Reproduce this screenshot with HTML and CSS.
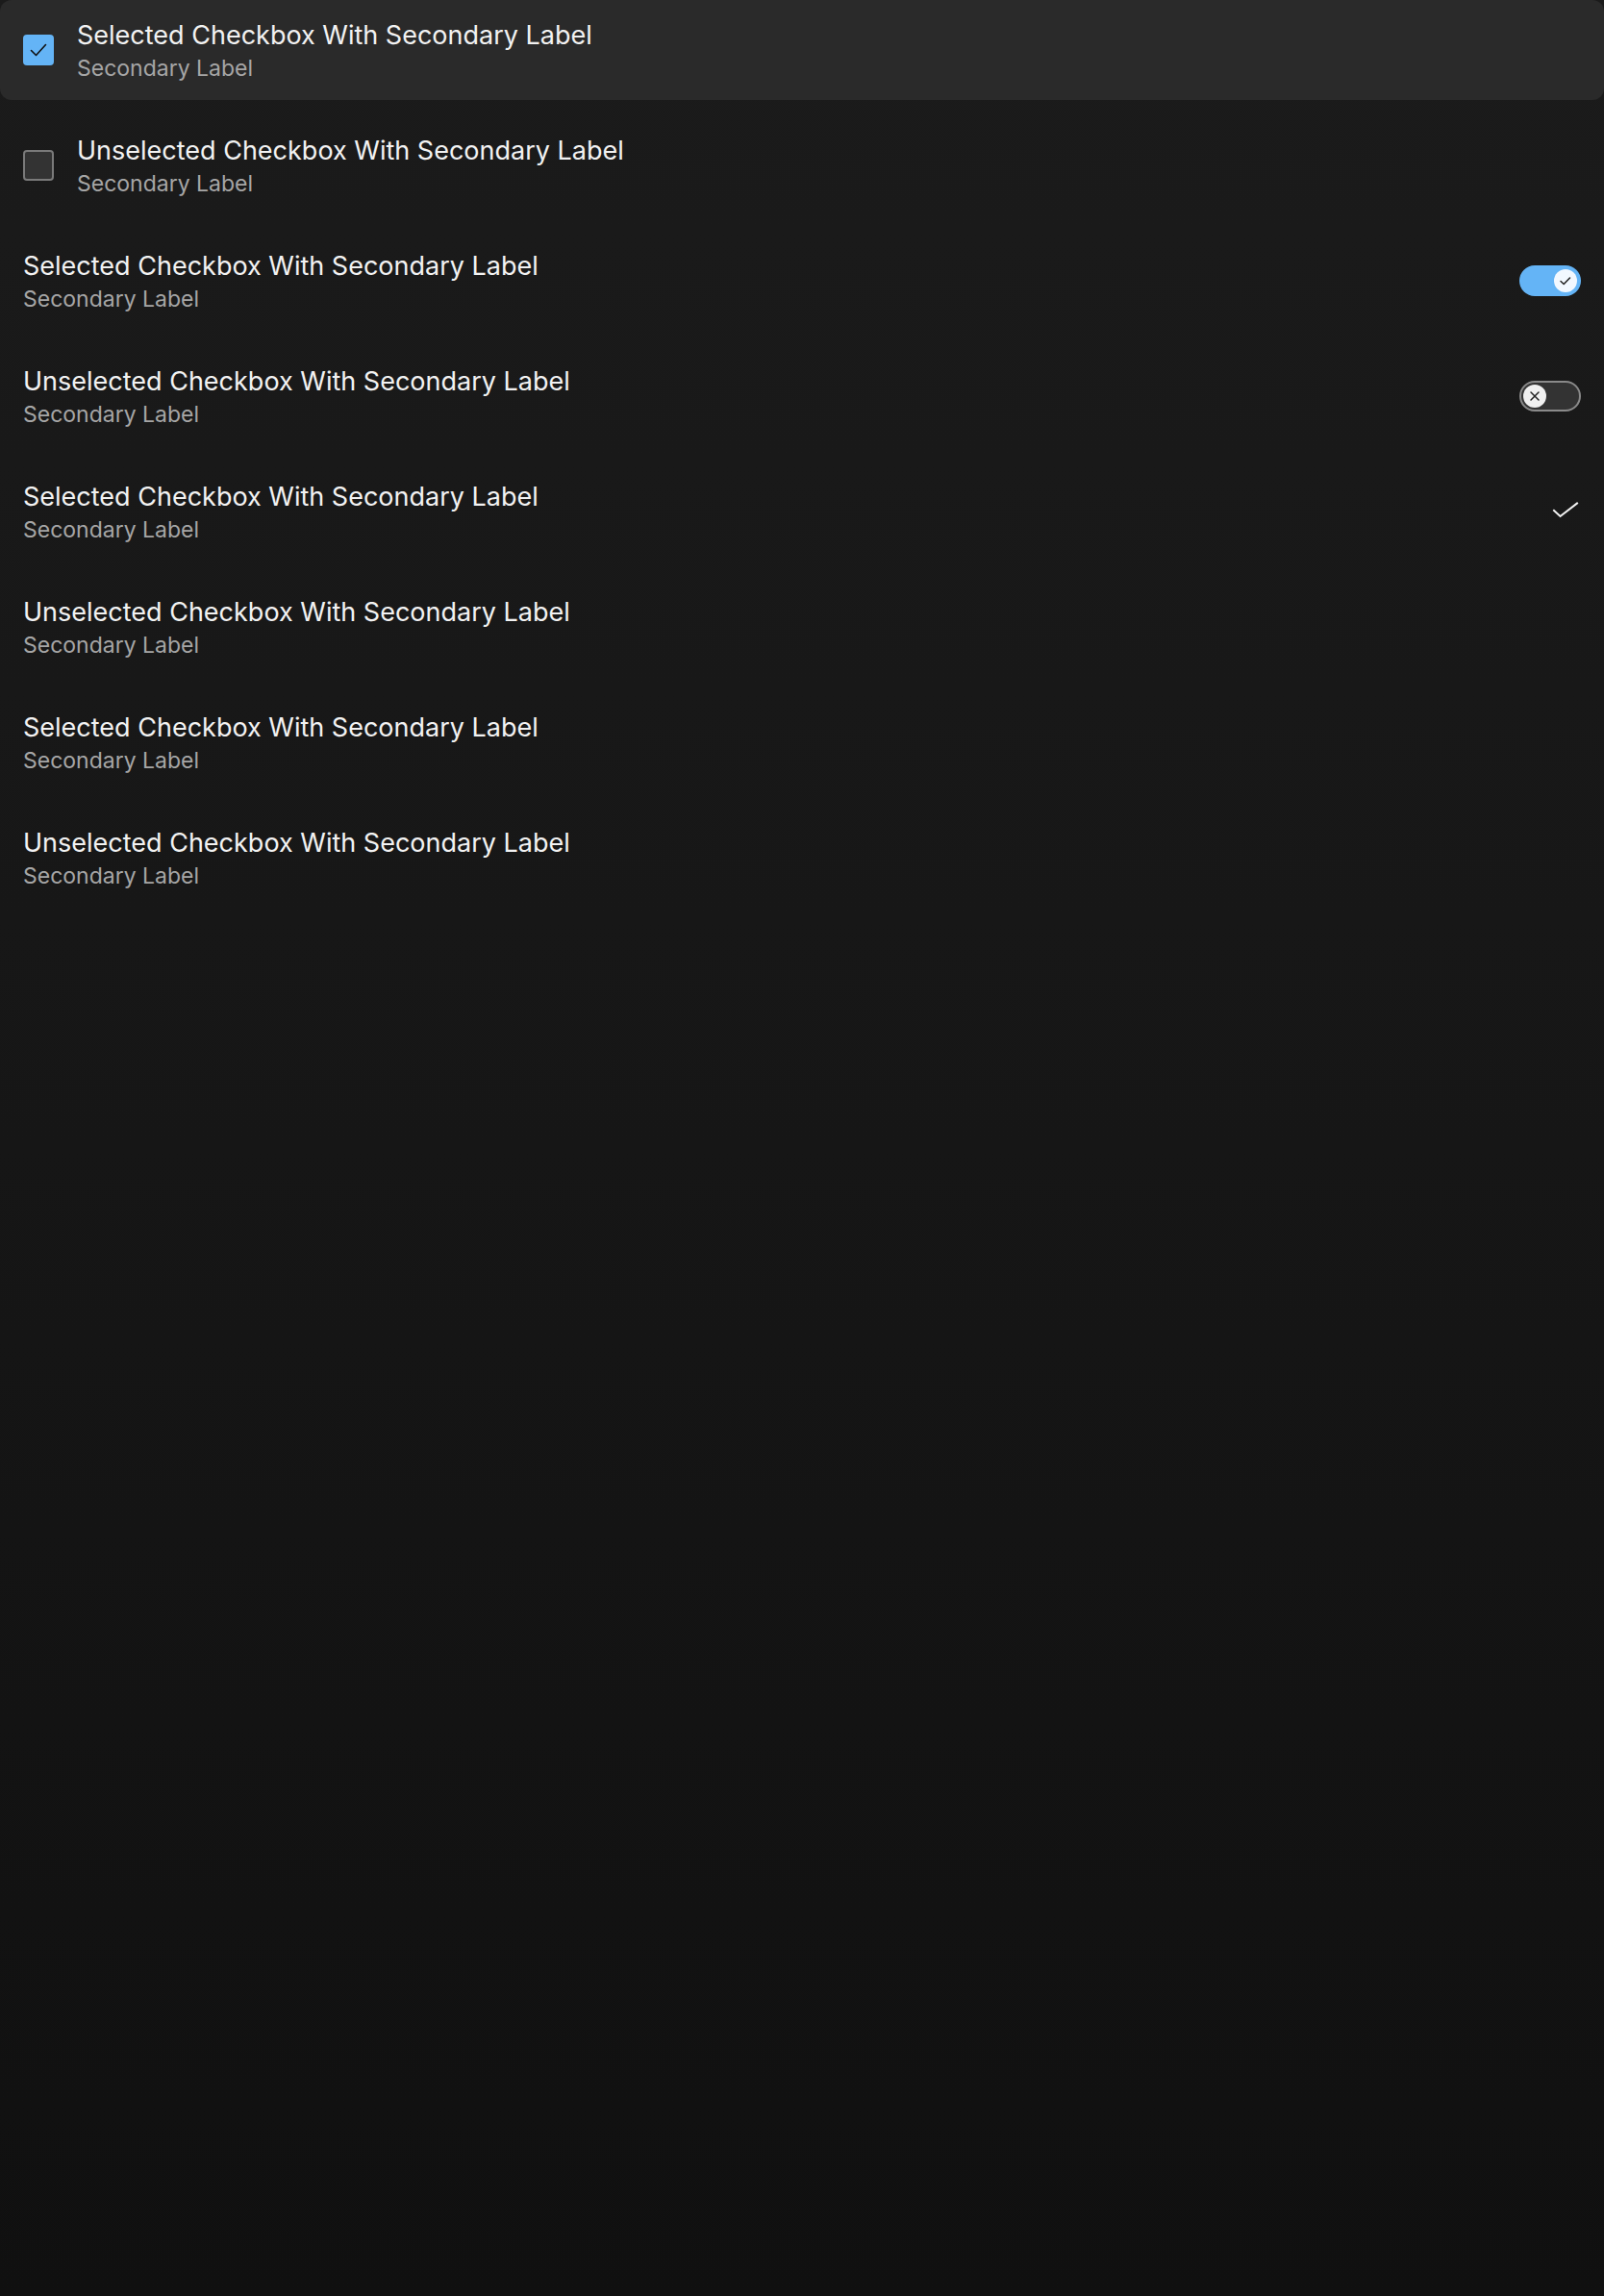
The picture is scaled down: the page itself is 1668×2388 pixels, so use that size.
FILE: index.html
```html
<!DOCTYPE html>
<html lang="en">
<head>
<meta charset="utf-8">
<title>List</title>
<link rel="stylesheet" href="styles.css">
</head>
<body>
<div class="list">
  <div class="item item--active">
    <span class="checkbox checkbox--on">
      <svg viewBox="0 0 32 32" width="32" height="32"><path d="M8.5 16.5l5 5 10-11" fill="none" stroke="#111" stroke-width="1.6" stroke-linecap="round" stroke-linejoin="round"/></svg>
    </span>
    <div class="labels">
      <div class="primary">Selected Checkbox With Secondary Label</div>
      <div class="secondary">Secondary Label</div>
    </div>
  </div>
  <div class="item">
    <span class="checkbox checkbox--off"></span>
    <div class="labels">
      <div class="primary">Unselected Checkbox With Secondary Label</div>
      <div class="secondary">Secondary Label</div>
    </div>
  </div>
  <div class="item">
    <div class="labels">
      <div class="primary">Selected Checkbox With Secondary Label</div>
      <div class="secondary">Secondary Label</div>
    </div>
    <span class="toggle toggle--on">
      <span class="knob">
        <svg viewBox="0 0 24 24" width="24" height="24"><path d="M7 12.5l3.2 3 6.3-6.5" fill="none" stroke="#222" stroke-width="1.5" stroke-linecap="round" stroke-linejoin="round"/></svg>
      </span>
    </span>
  </div>
  <div class="item">
    <div class="labels">
      <div class="primary">Unselected Checkbox With Secondary Label</div>
      <div class="secondary">Secondary Label</div>
    </div>
    <span class="toggle toggle--off">
      <span class="knob">
        <svg viewBox="0 0 24 24" width="24" height="24"><path d="M8 8l8 8M16 8l-8 8" fill="none" stroke="#222" stroke-width="1.5" stroke-linecap="round"/></svg>
      </span>
    </span>
  </div>
  <div class="item">
    <div class="labels">
      <div class="primary">Selected Checkbox With Secondary Label</div>
      <div class="secondary">Secondary Label</div>
    </div>
    <span class="check">
      <svg viewBox="0 0 28 20" width="28" height="20"><path d="M2 9l6.5 6L26 1.5" fill="none" stroke="#f2f2f2" stroke-width="2" stroke-linecap="square"/></svg>
    </span>
  </div>
  <div class="item">
    <div class="labels">
      <div class="primary">Unselected Checkbox With Secondary Label</div>
      <div class="secondary">Secondary Label</div>
    </div>
  </div>
  <div class="item">
    <div class="labels">
      <div class="primary">Selected Checkbox With Secondary Label</div>
      <div class="secondary">Secondary Label</div>
    </div>
  </div>
  <div class="item">
    <div class="labels">
      <div class="primary">Unselected Checkbox With Secondary Label</div>
      <div class="secondary">Secondary Label</div>
    </div>
  </div>
</div>
</body>
</html>
```

FILE: styles.css
```css
html, body {
  margin: 0;
  padding: 0;
}
body {
  min-height: 2388px;
  background: linear-gradient(180deg, #1b1b1b 0%, #161616 50%, #101010 100%);
  font-family: Inter, "Noto Sans", sans-serif;
  color: #f2f2f2;
}
.list {
  display: flex;
  flex-direction: column;
  gap: 16px;
}
.item {
  height: 104px;
  box-sizing: border-box;
  padding: 0 24px;
  display: flex;
  align-items: center;
  gap: 24px;
  border-radius: 12px;
}
.item--active {
  background: #2a2a2a;
}
.labels {
  flex: 1;
  display: flex;
  flex-direction: column;
}
.primary {
  font-size: 27px;
  line-height: 37px;
  color: #f2f2f2;
}
.secondary {
  font-size: 23px;
  line-height: 32px;
  color: #a6a6a6;
}
.checkbox {
  width: 32px;
  height: 32px;
  box-sizing: border-box;
  border-radius: 4px;
  flex: none;
  display: flex;
}
.checkbox--on {
  background: #64b4f6;
}
.checkbox--off {
  background: #333333;
  border: 2px solid #7a7a7a;
}
.toggle {
  width: 64px;
  height: 32px;
  box-sizing: border-box;
  border-radius: 16px;
  flex: none;
  display: flex;
  align-items: center;
  padding: 0 4px;
}
.toggle--on {
  background: #64b4f6;
  justify-content: flex-end;
}
.toggle--off {
  background: #333333;
  border: 2px solid #8a8a8a;
  padding: 0 2px;
}
.knob {
  width: 24px;
  height: 24px;
  border-radius: 50%;
  display: flex;
}
.toggle--on .knob {
  background: #f2f8ff;
}
.toggle--off .knob {
  background: #f0f0f0;
}
.check {
  flex: none;
  display: flex;
  margin-right: 2px;
}
```
